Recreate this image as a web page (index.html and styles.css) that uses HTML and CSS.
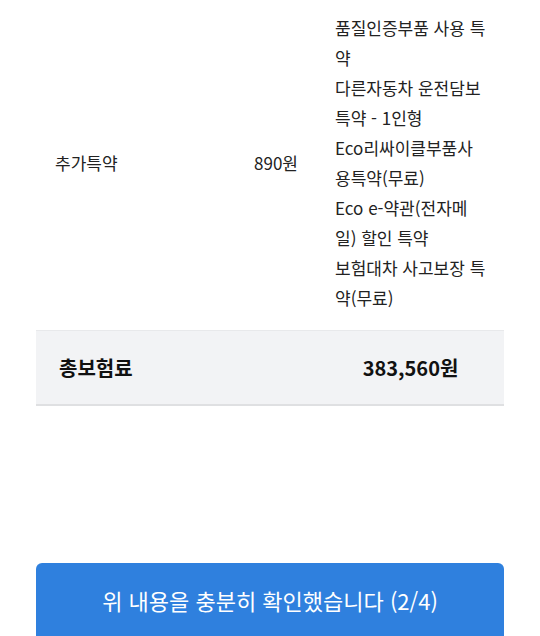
FILE: index.html
```html
<!DOCTYPE html>
<html lang="ko">
<head>
    <meta charset="UTF-8">
    <meta name="viewport" content="width=device-width, initial-scale=1.0">
    <title>보험료 확인</title>
    <link rel="stylesheet" href="styles.css">
</head>
<body>

<div class="container">
    <table class="premium-table">
        <colgroup>
            <col class="col-name">
            <col class="col-price">
            <col class="col-detail">
        </colgroup>
        <tr class="item-row">
            <td class="name">추가특약</td>
            <td class="price">890원</td>
            <td class="detail">
                품질인증부품 사용 특약<br>
                다른자동차 운전담보 특약 - 1인형<br>
                Eco리싸이클부품사용특약(무료)<br>
                Eco e-약관(전자메일) 할인 특약<br>
                보험대차 사고보장 특약(무료)
            </td>
        </tr>
        <tr class="total-row">
            <td class="total-label" colspan="2">총보험료</td>
            <td class="total-value">383,560원</td>
        </tr>
    </table>

    <button class="confirm-button">위 내용을 충분히 확인했습니다 (2/4)</button>
</div>

</body>
</html>
```

FILE: styles.css
```css
body {
    font-family: "Noto Sans CJK KR", "Noto Sans", sans-serif;
    background-color: #fff;
    color: #222;
    margin: 0;
    padding: 0;
}
.container {
    margin: 0 36px;
}
.premium-table {
    width: 100%;
    border-collapse: collapse;
    table-layout: fixed;
}
.col-name {
    width: 199px;
}
.col-price {
    width: 82px;
}
.item-row td {
    font-size: 17px;
    line-height: 30px;
    padding: 13px 18px 17px;
    vertical-align: middle;
    word-break: break-all;
}
.item-row .name {
    padding-left: 19px;
}
.item-row .price {
    text-align: center;
    padding: 13px 0 17px;
}
.item-row .detail {
    padding-right: 17px;
}
.total-row {
    background-color: #f2f3f5;
    border-top: 1px solid #e8e9eb;
    border-bottom: 2px solid #dfe0e2;
}
.total-row td {
    height: 73px;
    padding: 0;
    font-size: 20px;
    font-weight: bold;
    color: #111;
}
.total-label {
    padding-left: 23px !important;
}
.total-value {
    text-align: center;
}
.confirm-button {
    display: block;
    width: 100%;
    height: 80px;
    margin-top: 157px;
    padding: 0 0 6px;
    border: none;
    border-radius: 6px 6px 0 0;
    background-color: #2f80de;
    color: #fff;
    font-family: inherit;
    font-size: 22px;
    cursor: pointer;
}
```
